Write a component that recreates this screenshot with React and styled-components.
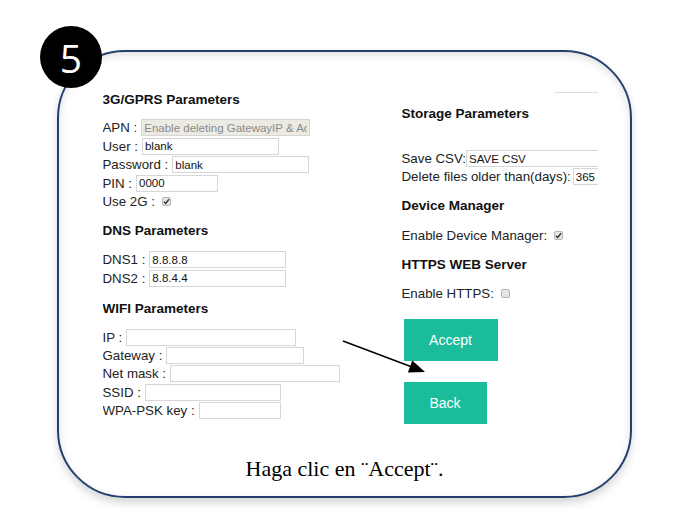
import React from 'react';
import styled, { createGlobalStyle } from 'styled-components';

const GlobalStyle = createGlobalStyle`
  html, body {
    margin: 0;
    padding: 0;
    background: #ffffff;
  }
  body {
    font-family: "Liberation Sans", Arial, sans-serif;
  }
`;

const Page = styled.div`
  position: relative;
  width: 699px;
  height: 515px;
  overflow: hidden;
  padding: 50px 0 0 57px;
  box-sizing: border-box;
`;

const Badge = styled.div`
  position: absolute;
  left: 40px;
  top: 26px;
  width: 62px;
  height: 62px;
  border-radius: 50%;
  background: #000;
  color: #fff;
  display: flex;
  align-items: center;
  justify-content: center;
  font-family: "Open Sans", sans-serif;
  font-size: 39px;
  font-weight: 500;
  line-height: 1;
  z-index: 2;
`;

const Frame = styled.div`
  position: relative;
  width: 575px;
  height: 448px;
  box-sizing: border-box;
  border: 2.5px solid #24406f;
  border-radius: 68px;
  box-shadow: inset 0 3px 8px rgba(0, 0, 0, 0.12), 0 5px 9px rgba(0, 0, 0, 0.16);
  display: flex;
  flex-direction: column;
`;

const Screen = styled.div`
  display: grid;
  grid-template-columns: 299px 196px;
  margin: 39.5px 0 0 43.5px;
  color: #222;
`;

const Column = styled.div`
  display: flex;
  flex-direction: column;
  align-items: flex-start;
  overflow: hidden;
`;

const Heading = styled.div`
  font-size: 13.5px;
  font-weight: bold;
  color: #111;
  line-height: 16px;
  margin: ${p => p.$m || '0'};
`;

const Row = styled.div`
  display: flex;
  align-items: center;
  height: ${p => p.$h || 18.5}px;
  white-space: nowrap;
  font-size: 13.3px;
`;

const Field = styled.input`
  box-sizing: border-box;
  flex: none;
  width: ${p => p.$w}px;
  height: 17px;
  margin: 0 0 0 ${p => (p.$gap === undefined ? 4 : p.$gap)}px;
  padding: 0 2px;
  border: 1px solid #d6d6d6;
  background: ${p => (p.disabled ? '#ebebe4' : '#fff')};
  color: ${p => (p.disabled ? '#8a8a8a' : '#111')};
  font-family: "Liberation Sans", Arial, sans-serif;
  font-size: 11.5px;
  outline: none;
`;

const Check = styled.span`
  display: inline-flex;
  align-items: center;
  justify-content: center;
  width: 9px;
  height: 9px;
  margin-left: ${p => p.$gap || 7}px;
  border: 1px solid #b4b4b4;
  border-radius: 2px;
  background: #e6e6e6;
  box-sizing: border-box;
`;

const Rule = styled.div`
  width: 43px;
  height: 1px;
  background: #dcdcdc;
  margin: 0 0 13px 153px;
`;

const Button = styled.button`
  appearance: none;
  border: none;
  background: #1abc9c;
  color: #fff;
  font-family: "Liberation Sans", Arial, sans-serif;
  font-size: 14px;
  width: ${p => p.$w}px;
  height: 42px;
  margin: ${p => p.$m};
  padding: 0;
`;

const Caption = styled.div`
  margin-top: auto;
  margin-bottom: 14px;
  text-align: center;
  font-family: "Liberation Serif", "Times New Roman", serif;
  font-size: 22px;
  line-height: 26px;
  color: #000;
`;

const Arrow = styled.svg`
  position: absolute;
  left: 0;
  top: 0;
  pointer-events: none;
  z-index: 3;
`;

function Tick({ on }) {
  return (
    <Check>
      {on && (
        <svg width="7" height="7" viewBox="0 0 7 7">
          <path d="M1 3.8 L2.7 5.4 L6 1.2" fill="none" stroke="#333" strokeWidth="1.4" />
        </svg>
      )}
    </Check>
  );
}

function Input({ label, w, value = '', gap, disabled, h }) {
  return (
    <Row $h={h}>
      <span>{label}</span>
      <Field $w={w} $gap={gap} defaultValue={value} disabled={disabled} readOnly />
    </Row>
  );
}

export default function App() {
  return (
    <Page>
      <GlobalStyle />
      <Badge>5</Badge>
      <Frame>
        <Screen>
          <Column>
            <Heading $m="0 0 11px">3G/GPRS Parameters</Heading>
            <Input label="APN :" w={169} value="Enable deleting GatewayIP & Access" disabled />
            <Input label="User :" w={137} value="blank" />
            <Input label="Password :" w={137} value="blank" />
            <Input label="PIN :" w={82} value="0000" />
            <Row>
              <span>Use 2G :</span>
              <Tick on />
            </Row>

            <Heading $m="11.5px 0 12px">DNS Parameters</Heading>
            <Input label="DNS1 :" w={137} value="8.8.8.8" />
            <Input label="DNS2 :" w={137} value="8.8.4.4" />

            <Heading $m="13px 0 12px">WIFI Parameters</Heading>
            <Input label="IP :" w={170} h={18.2} />
            <Input label="Gateway :" w={138} h={18.2} />
            <Input label="Net mask :" w={170} h={18.2} />
            <Input label="SSID :" w={136} h={18.2} />
            <Input label="WPA-PSK key :" w={82} h={18.2} />
          </Column>

          <Column>
            <Rule />
            <Heading $m="0 0 28px">Storage Parameters</Heading>
            <Input label="Save CSV:" w={160} value="SAVE CSV" gap={0} />
            <Input label="Delete files older than(days):" w={60} value="365" gap={2} h={17} />

            <Heading $m="13px 0 12px">Device Manager</Heading>
            <Row>
              <span>Enable Device Manager:</span>
              <Tick on />
            </Row>

            <Heading $m="12px 0 12px">HTTPS WEB Server</Heading>
            <Row>
              <span>Enable HTTPS:</span>
              <Tick />
            </Row>

            <Button $w={94} $m="16px 0 0 2px">Accept</Button>
            <Button $w={83} $m="21px 0 0 2px">Back</Button>
          </Column>
        </Screen>
        <Caption>Haga clic en ¨Accept¨.</Caption>
      </Frame>
      <Arrow width="699" height="515" viewBox="0 0 699 515">
        <line x1="343" y1="341" x2="412" y2="367" stroke="#000" strokeWidth="1.6" />
        <polygon points="425,372 407.9,372.4 412.3,360.6" fill="#000" />
      </Arrow>
    </Page>
  );
}
